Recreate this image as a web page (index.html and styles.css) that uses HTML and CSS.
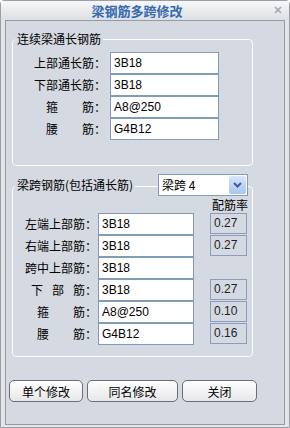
FILE: index.html
```html
<!DOCTYPE html>
<html lang="zh-CN">
<head>
    <meta charset="UTF-8">
    <meta name="viewport" content="width=device-width, initial-scale=1.0">
    <title>梁钢筋多跨修改</title>
    <link rel="stylesheet" href="styles.css">
</head>
<body>
    <div class="window">
        <div class="title-bar">
            <span class="title">梁钢筋多跨修改</span>
            <span class="close">
                <svg width="8" height="8" viewBox="0 0 8 8"><path d="M1 1 L7 7 M7 1 L1 7" stroke="#a3a7ad" stroke-width="1.6"/></svg>
            </span>
        </div>

        <div class="panel">
            <!-- 连续梁通长钢筋 -->
            <div class="group group-long">
                <div class="group-head">
                    <span class="legend">连续梁通长钢筋</span>
                </div>
                <div class="rows">
                    <div class="row"><label>上部通长筋：</label><input class="field" value="3B18"></div>
                    <div class="row"><label>下部通长筋：</label><input class="field" value="3B18"></div>
                    <div class="row"><label>箍　　筋：</label><input class="field" value="A8@250"></div>
                    <div class="row"><label>腰　　筋：</label><input class="field" value="G4B12"></div>
                </div>
            </div>

            <!-- 梁跨钢筋 -->
            <div class="group group-span">
                <div class="group-head">
                    <span class="legend">梁跨钢筋(包括通长筋)</span>
                    <div class="combo">
                        <span class="combo-text">梁跨 4</span>
                        <span class="combo-btn">
                            <svg width="9" height="6" viewBox="0 0 9 6"><path d="M1 1 L4.5 4.5 L8 1" fill="none" stroke="#3d5f9e" stroke-width="2"/></svg>
                        </span>
                    </div>
                </div>
                <div class="ratio-title">配筋率</div>
                <div class="rows">
                    <div class="row"><label>左端上部筋：</label><input class="field" value="3B18"><span class="ratio">0.27</span></div>
                    <div class="row"><label>右端上部筋：</label><input class="field" value="3B18"><span class="ratio">0.27</span></div>
                    <div class="row"><label>跨中上部筋：</label><input class="field" value="3B18"></div>
                    <div class="row"><label><span class="spread">下部</span>筋：</label><input class="field" value="3B18"><span class="ratio">0.27</span></div>
                    <div class="row"><label>箍　　筋：</label><input class="field" value="A8@250"><span class="ratio">0.10</span></div>
                    <div class="row"><label>腰　　筋：</label><input class="field" value="G4B12"><span class="ratio">0.16</span></div>
                </div>
            </div>

            <div class="buttons">
                <button class="btn btn-single">单个修改</button>
                <button class="btn btn-same">同名修改</button>
                <button class="btn btn-close">关闭</button>
            </div>
        </div>
    </div>
</body>
</html>
```

FILE: styles.css
```css
* {
    margin: 0;
    padding: 0;
    box-sizing: border-box;
}

body {
    font-family: "Noto Sans CJK SC", sans-serif;
    font-size: 12px;
    background: #ffffff;
}

.window {
    width: 290px;
    height: 428px;
    display: flex;
    flex-direction: column;
    background: #e3e5e9;
    border: 1px solid #9a9ea6;
    border-radius: 4px 4px 0 0;
}

.title-bar {
    height: 19px;
    display: flex;
    align-items: center;
    justify-content: center;
    padding-right: 16px;
    background: linear-gradient(#f8f8f9, #dcdfe4);
    position: relative;
}

.title {
    color: #3569b0;
    font-size: 13px;
    font-weight: bold;
    line-height: 19px;
}

.close {
    position: absolute;
    right: 7px;
    top: 5px;
    display: flex;
}

.panel {
    height: 405px;
    margin: 0 4px;
    background: #d5d9e1;
    border: 1px solid #959aa3;
}

.group {
    width: 241px;
    margin-left: 6px;
    border: 1px solid #fbfcfd;
    border-radius: 4px;
}

.group-long {
    margin-top: 18px;
    padding-bottom: 25px;
}

.group-span {
    margin-top: 20px;
    padding-bottom: 11px;
}

.group-head {
    display: flex;
    align-items: center;
}

.group-long .group-head {
    height: 12px;
    margin-top: -7px;
}

.group-span .group-head {
    height: 22px;
    margin-top: -13px;
}

.legend {
    margin-left: 2px;
    padding: 0 2px;
    background: #d5d9e1;
    line-height: 12px;
    color: #000;
}

.rows {
    display: flex;
    flex-direction: column;
}

.group-long .rows {
    margin-top: 7px;
}

.row {
    display: flex;
    height: 22px;
    align-items: center;
}

.row label {
    text-align: right;
    line-height: 22px;
    white-space: nowrap;
    color: #000;
}

.group-long .row label {
    width: 97px;
    padding-right: 4px;
}

.group-span .row label {
    width: 85px;
    padding-right: 1px;
}

.spread {
    letter-spacing: 9px;
}

.field {
    height: 22px;
    border: 1px solid #7f9db9;
    background: #fff;
    padding: 0 3px;
    font-family: "Liberation Sans", sans-serif;
    font-size: 12px;
    color: #000;
    outline: none;
}

.group-long .field {
    width: 109px;
}

.group-span .field {
    width: 96px;
}

.ratio {
    align-self: flex-start;
    width: 37px;
    height: 21px;
    margin-left: 16px;
    padding-left: 3px;
    border: 1px solid #8d9bbd;
    font-family: "Liberation Sans", sans-serif;
    font-size: 12px;
    line-height: 19px;
    color: #1e1e1e;
}

.combo {
    display: flex;
    align-items: center;
    width: 90px;
    height: 22px;
    margin-left: auto;
    margin-right: 4px;
    background: #fff;
    border: 1px solid #7f9db9;
}

.combo-text {
    flex: 1;
    padding-left: 3px;
    line-height: 20px;
}

.combo-btn {
    width: 17px;
    height: 18px;
    margin-right: 1px;
    display: flex;
    align-items: center;
    justify-content: center;
    border-radius: 2px;
    background: linear-gradient(#d9e6fb, #a9c4f0);
}

.ratio-title {
    height: 17px;
    line-height: 17px;
    text-align: right;
    padding-right: 4px;
}

.buttons {
    display: flex;
    gap: 4px;
    margin: 23px 0 0 3px;
}

.btn {
    height: 22px;
    border: 1px solid #6b6e73;
    border-radius: 5px;
    background: linear-gradient(#ffffff, #e6e7ea);
    font-family: "Noto Sans CJK SC", sans-serif;
    font-size: 12px;
    color: #000;
}

.btn-single {
    width: 74px;
}

.btn-same {
    width: 91px;
}

.btn-close {
    width: 75px;
}
```
